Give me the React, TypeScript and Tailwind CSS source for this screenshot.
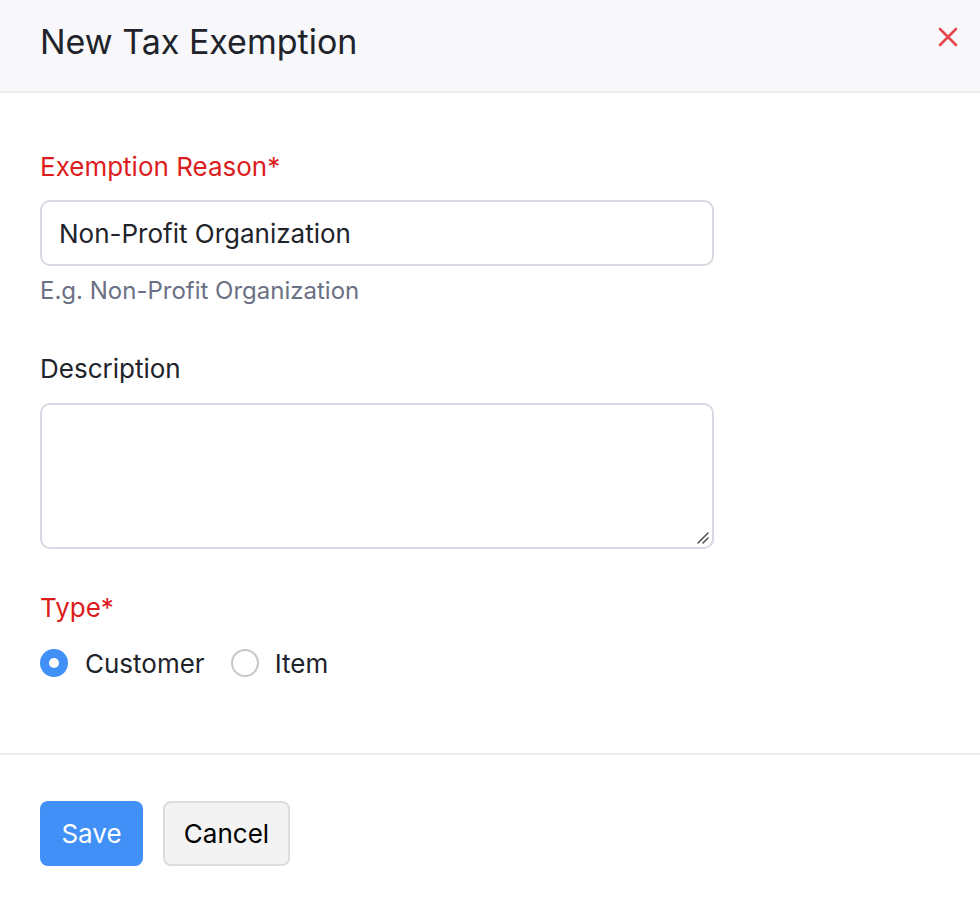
import React from "react";

export default function App() {
  return (
    <div className="h-[908px] w-[980px] overflow-hidden bg-[#3f3f46]" style={{ fontFamily: "Inter, 'Noto Sans', sans-serif" }}>
      <div className="flex h-[924px] flex-col rounded-b-[16px] bg-white">
        <div className="flex h-[93px] shrink-0 items-start justify-between border-b-2 border-[#ececef] bg-[#f8f8fa] pl-[40px] pr-[22px] pt-[22px]">
          <h1 className="text-[34px] leading-[40px] text-[#21232b]">New Tax Exemption</h1>
          <button className="mt-[5px] flex h-[20px] w-[20px] items-center justify-center text-[#e5484d]">
            <svg width="20" height="20" viewBox="0 0 20 20" fill="none" stroke="currentColor" strokeWidth="2.6" strokeLinecap="round">
              <path d="M2 2L18 18M18 2L2 18" />
            </svg>
          </button>
        </div>
        <div className="flex flex-col px-[40px] pt-[59px]">
          <label className="text-[26px] leading-[30px] text-[#dd1d1d]">Exemption Reason*</label>
          <div className="mt-[18px] flex h-[66px] w-[674px] items-center rounded-[10px] border-2 border-[#d8d8e2] px-[17px] text-[26px] text-[#21232b]">
            Non-Profit Organization
          </div>
          <div className="mt-[11px] text-[24px] leading-[28px] text-[#6b7085]">E.g. Non-Profit Organization</div>
          <label className="mt-[49px] text-[26px] leading-[30px] text-[#21232b]">Description</label>
          <div className="relative mt-[19px] h-[146px] w-[674px] rounded-[10px] border-2 border-[#d8d8e2]">
            <svg className="absolute bottom-[2px] right-[2px]" width="14" height="14" viewBox="0 0 14 14" stroke="#555" strokeWidth="1.6" strokeLinecap="round">
              <path d="M2 12L12 2M7 12L12 7" />
            </svg>
          </div>
          <label className="mt-[44px] text-[26px] leading-[30px] text-[#dd1d1d]">Type*</label>
          <div className="mt-[25px] flex h-[30px] items-center text-[26px] text-[#21232b]">
            <span className="flex h-[28px] w-[28px] items-center justify-center rounded-full bg-[#4190f7]">
              <span className="h-[10px] w-[10px] rounded-full bg-white" />
            </span>
            <span className="ml-[17px]">Customer</span>
            <span className="ml-[26px] h-[28px] w-[28px] rounded-full border-2 border-[#c8c8cc]" />
            <span className="ml-[16px]">Item</span>
          </div>
        </div>
        <div className="mt-[75px] border-t-2 border-[#ececef]" />
        <div className="flex gap-[20px] px-[40px] pt-[46px]">
          <button className="h-[65px] w-[103px] rounded-[8px] bg-[#4190f7] text-[26px] text-white">Save</button>
          <button className="h-[65px] w-[127px] rounded-[8px] border-2 border-[#dcdcdc] bg-[#f3f3f3] text-[26px] text-black">Cancel</button>
        </div>
      </div>
    </div>
  );
}
